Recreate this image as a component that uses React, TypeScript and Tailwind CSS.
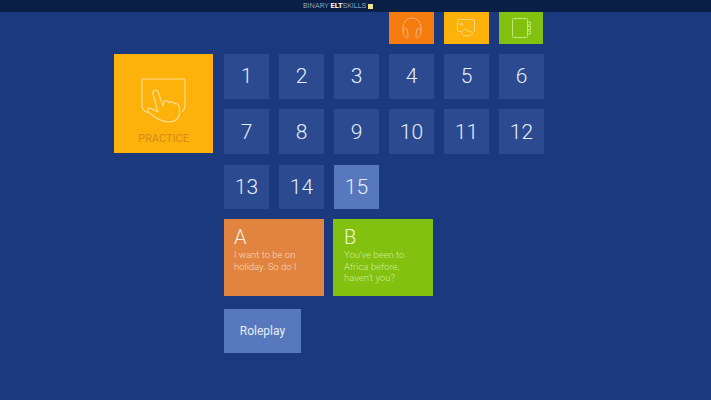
const numbers = [1, 2, 3, 4, 5, 6, 7, 8, 9, 10, 11, 12, 13, 14, 15];

function Headphones() {
  return (
    <svg width="22" height="22" viewBox="0 0 22 22" fill="none" stroke="#fbb27a" strokeWidth="1">
      <path d="M2 14V10a9 9 0 0 1 18 0v4" />
      <path d="M2 14c0-2 4-3 4.500-1.500L7 19.500c0 1.500-2.500 1.500-3 .5-1-1.500-2-3.500-2-6z" />
      <path d="M20 14c0-2-4-3-4.500-1.500L15 19.500c0 1.500 2.500 1.500 3 .5 1-1.500 2-3.500 2-6z" />
    </svg>
  );
}

function PictureHand() {
  return (
    <svg width="21" height="18" viewBox="0 0 21 18" fill="none" stroke="#ffd77e" strokeWidth="1">
      <path d="M5 12.500H2.500a1 1 0 0 1-1-1V1.500a1 1 0 0 1 1-1h15a1 1 0 0 1 1 1v10a1 1 0 0 1-1 1H17" />
      <path d="M6 13c1-2 2.500-3 4-2.500l2 1.500c2 0 4 .5 4.500 2S13 17.500 10 17 5 15 6 13z" />
      <circle cx="5.500" cy="5" r="1.300" />
    </svg>
  );
}

function Notebook() {
  return (
    <svg width="21" height="22" viewBox="0 0 21 22" fill="none" stroke="#c4e570" strokeWidth="1">
      <rect x="1.500" y="1.500" width="15" height="19" rx="1" />
      <path d="M16.500 5h3v3h-3M16.500 9.500h3v3h-3M16.500 14h3v3h-3" />
    </svg>
  );
}

function TouchHand() {
  return (
    <svg width="46" height="46" viewBox="0 0 46 46" fill="none" stroke="#ffdc8e" strokeWidth="1.200" strokeLinejoin="round">
      <path d="M7 35C3 33 1 31 1 28V2a1 1 0 0 1 1-1h41a1 1 0 0 1 1 1v26c0 2-1 4-3 6" />
      <path d="M11 37C8 35 6 33 7 31c1-2 5 0 10 3L12 16c-1-4 4-5 5-2l5 14 1-4c1-2 4-2 5 1 1-2 4-2 5 1 1-1 4-1 5 2 1 5 1 11-3 14-4 3-14 3-24-5z" />
    </svg>
  );
}

export default function App() {
  return (
    <div className="flex h-[400px] w-[711px] flex-col overflow-hidden bg-[#1b397f] font-['Roboto',sans-serif] font-light text-white">
      <header className="flex h-3 items-center gap-[2px] bg-[#0a1f45] pl-[303px] text-[7.5px] leading-none text-[#b9c6da]">
        <span>
          BINARY <span className="font-bold text-white">ELT</span>SKILLS
        </span>
        <span className="h-[5px] w-[5px] bg-[#f2e58c]" />
      </header>

      <div className="flex gap-[10px] pl-[389px]">
        <div className="flex h-[32px] w-[45px] items-center justify-center bg-[#f57c0e]">
          <Headphones />
        </div>
        <div className="flex h-[32px] w-[45px] items-center justify-center bg-[#fdb10b]">
          <PictureHand />
        </div>
        <div className="flex h-[32px] w-[44px] items-center justify-center bg-[#82c110]">
          <Notebook />
        </div>
      </div>

      <main className="mt-[10px] flex items-start gap-[11px] pl-[114px]">
        <div className="flex h-[99px] w-[99px] flex-col items-center bg-[#fdb10b] pt-[24px]">
          <TouchHand />
          <span className="mt-[8px] text-[11px] leading-[13px] font-normal text-[#d38a1a]">PRACTICE</span>
        </div>

        <div className="flex flex-col">
          <div className="grid w-[320px] grid-cols-[repeat(6,45px)] gap-x-[10px] gap-y-[10.75px]">
            {numbers.map((n) => (
              <div
                key={n}
                className={`flex h-[44.5px] items-center justify-center pt-[1px] text-[21px] leading-none text-[#e6eefc] ${
                  n === 15 ? "bg-[#5878bd]" : "bg-[#2b4a90]"
                }`}
              >
                {n}
              </div>
            ))}
          </div>

          <div className="mt-[10px] flex gap-[9px]">
            <div className="h-[77px] w-[100px] bg-[#e08440] px-[10px] pt-[8px] text-[#fbdcc0]">
              <div className="text-[20px] leading-[20px] text-[#fdeee0]">A</div>
              <p className="mt-[2px] text-[9.5px] leading-[11.5px]">
                I want to be on
                <br />
                holiday. So do I
              </p>
            </div>
            <div className="h-[77px] w-[100px] bg-[#82c110] px-[11px] pt-[8px] text-[#d3ec9c]">
              <div className="text-[20px] leading-[20px] text-[#eef9d4]">B</div>
              <p className="mt-[2px] text-[9.5px] leading-[11.5px]">
                You've been to
                <br />
                Africa before,
                <br />
                haven't you?
              </p>
            </div>
          </div>

          <div className="mt-[13px] flex h-[44px] w-[77px] items-center justify-center bg-[#5878bd] text-[12px] font-normal text-[#e6eefc]">
            Roleplay
          </div>
        </div>
      </main>
    </div>
  );
}
